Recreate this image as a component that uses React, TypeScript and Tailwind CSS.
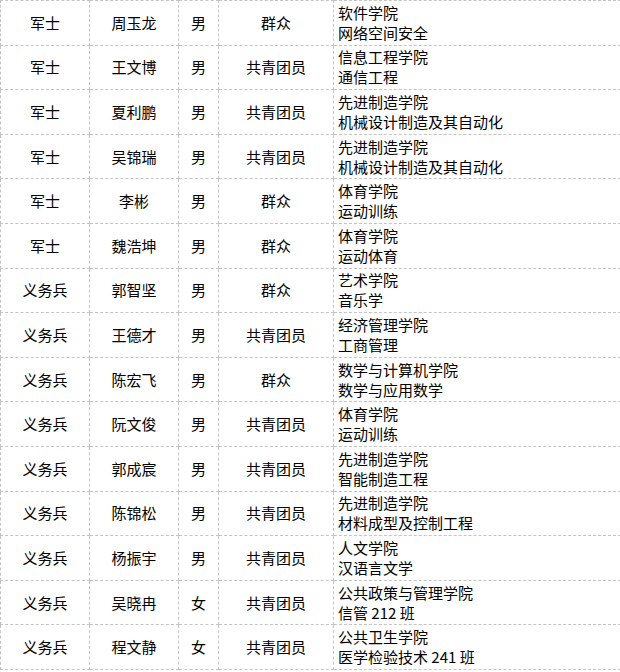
const rows: [string, string, string, string, string, string][] = [
  ["军士", "周玉龙", "男", "群众", "软件学院", "网络空间安全"],
  ["军士", "王文博", "男", "共青团员", "信息工程学院", "通信工程"],
  ["军士", "夏利鹏", "男", "共青团员", "先进制造学院", "机械设计制造及其自动化"],
  ["军士", "吴锦瑞", "男", "共青团员", "先进制造学院", "机械设计制造及其自动化"],
  ["军士", "李彬", "男", "群众", "体育学院", "运动训练"],
  ["军士", "魏浩坤", "男", "群众", "体育学院", "运动体育"],
  ["义务兵", "郭智坚", "男", "群众", "艺术学院", "音乐学"],
  ["义务兵", "王德才", "男", "共青团员", "经济管理学院", "工商管理"],
  ["义务兵", "陈宏飞", "男", "群众", "数学与计算机学院", "数学与应用数学"],
  ["义务兵", "阮文俊", "男", "共青团员", "体育学院", "运动训练"],
  ["义务兵", "郭成宸", "男", "共青团员", "先进制造学院", "智能制造工程"],
  ["义务兵", "陈锦松", "男", "共青团员", "先进制造学院", "材料成型及控制工程"],
  ["义务兵", "杨振宇", "男", "共青团员", "人文学院", "汉语言文学"],
  ["义务兵", "吴晓冉", "女", "共青团员", "公共政策与管理学院", "信管 212 班"],
  ["义务兵", "程文静", "女", "共青团员", "公共卫生学院", "医学检验技术 241 班"],
];

const cell = "border border-dashed border-[#c4c4c4] p-0 text-center align-middle";

export default function App() {
  return (
    <div className="w-[620px] bg-white text-black text-[15px] leading-[20px] [font-family:'Noto_Sans_CJK_SC','Noto_Sans',sans-serif]">
      <table className="w-[620px] border-collapse table-fixed">
        <colgroup>
          <col className="w-[89px]" />
          <col className="w-[89px]" />
          <col className="w-[40px]" />
          <col className="w-[115px]" />
          <col className="w-[287px]" />
        </colgroup>
        <tbody>
          {rows.map((r, i) => (
            <tr key={i} className="h-[44.6px]">
              <td className={cell}>{r[0]}</td>
              <td className={cell}>{r[1]}</td>
              <td className={cell}>{r[2]}</td>
              <td className={cell}>{r[3]}</td>
              <td className="border border-dashed border-[#c4c4c4] py-0 pl-[4px] pr-0 text-left align-middle">
                <div>{r[4]}</div>
                <div>{r[5]}</div>
              </td>
            </tr>
          ))}
        </tbody>
      </table>
    </div>
  );
}
